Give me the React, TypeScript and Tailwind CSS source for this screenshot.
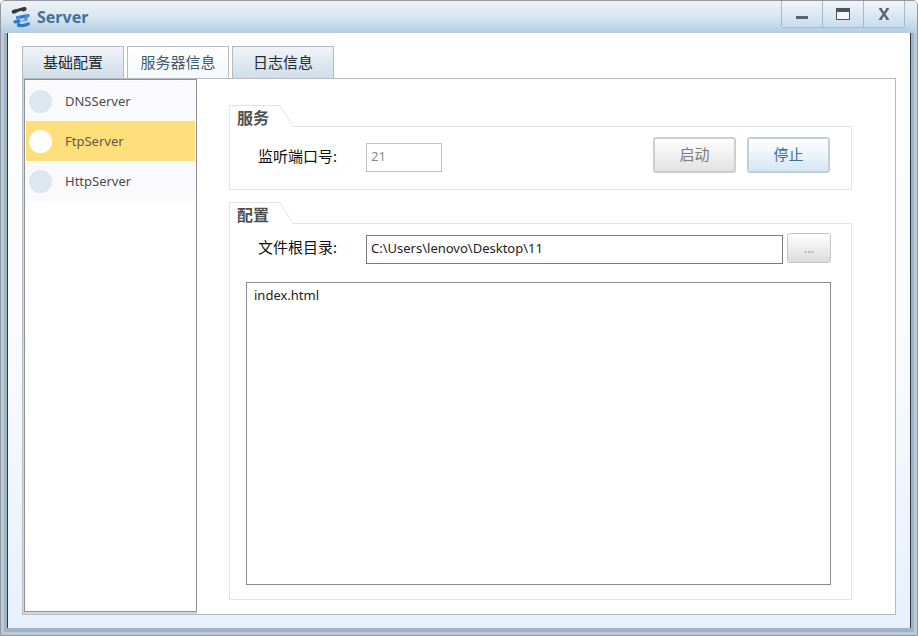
import { useState, type ReactNode } from "react";

const servers = ["DNSServer", "FtpServer", "HttpServer"];
const tabs = ["基础配置", "服务器信息", "日志信息"];
const files = ["index.html"];

function Logo() {
  return (
    <svg width="20" height="24" viewBox="0 0 20 24" fill="none" aria-hidden="true">
      <path d="M3 6.4 L5 6 L9 4.6 L13.4 3.8" stroke="#33383f" strokeWidth="3" strokeLinecap="round" strokeLinejoin="round" />
      <path d="M2.6 6.8 L4 6.4 M12.4 4.4 L13.6 4" stroke="#33383f" strokeWidth="4" strokeLinecap="round" />
      <path d="M6.5 12.6 L12 11.6 L17 10.6" stroke="#2f78c8" strokeWidth="3.2" strokeLinecap="round" />
      <path d="M7.5 12.5 L7.5 19.5 M15.5 11 L14.6 15" stroke="#4a94dc" strokeWidth="3" strokeLinecap="round" />
      <path d="M4 16.8 L7 16.4 M7.5 20.4 L12 20.6 L17.4 19" stroke="#2f78c8" strokeWidth="3.2" strokeLinecap="round" strokeLinejoin="round" />
      <path d="M10 16 L14 15.4" stroke="#7bb8f0" strokeWidth="2" strokeLinecap="round" />
    </svg>
  );
}

function WindowButtons() {
  const button =
    "flex h-[26px] w-[41px] items-center justify-center border-l border-[#a9b8c8] bg-linear-to-b from-[#f1f5f9] to-[#c9dcec]";
  return (
    <div className="flex rounded-b-[3px] border-r border-b border-[#a9b8c8]">
      <button type="button" aria-label="Minimize" className={button}>
        <svg width="14" height="12" viewBox="0 0 14 12" aria-hidden="true">
          <rect x="1" y="8" width="12" height="3" fill="#5b6370" />
        </svg>
      </button>
      <button type="button" aria-label="Maximize" className={button}>
        <svg width="14" height="12" viewBox="0 0 14 12" aria-hidden="true">
          <rect x="0.5" y="0.5" width="13" height="11" fill="#f4f7fa" stroke="#4c5460" />
          <rect x="0" y="0" width="14" height="4" fill="#4c5460" />
        </svg>
      </button>
      <button type="button" aria-label="Close" className={button}>
        <svg width="12" height="12" viewBox="0 0 12 12" fill="none" aria-hidden="true">
          <path d="M2.5 1 L9.5 11 M9.5 1 L2.5 11" stroke="#5b6370" strokeWidth="2.2" />
          <path d="M1 0.8 H4 M8 0.8 H11 M1 11.2 H4 M8 11.2 H11" stroke="#5b6370" strokeWidth="1.4" />
        </svg>
      </button>
    </div>
  );
}

function Group({ title, className, children }: { title: string; className: string; children: ReactNode }) {
  return (
    <section className={`flex flex-col ${className}`}>
      <div className="flex h-[22px]">
        <h2 className="w-[51px] border-t border-l border-[#e4e4e4] pl-[7px] text-[16px] leading-6 font-bold whitespace-nowrap text-[#505050]">
          {title}
        </h2>
        <svg width="14" height="22" viewBox="0 0 14 22" fill="none" aria-hidden="true">
          <path d="M0 0.5 L13 21.5 H14" stroke="#e4e4e4" />
        </svg>
        <div className="flex-1 border-b border-[#e4e4e4]" />
      </div>
      <div className="flex flex-1 flex-col border-x border-b border-[#e4e4e4]">{children}</div>
    </section>
  );
}

export default function App() {
  const [tab, setTab] = useState(1);
  const [server, setServer] = useState(1);
  const [path, setPath] = useState("C:\\Users\\lenovo\\Desktop\\11");

  return (
    <div className="flex min-h-screen flex-col rounded-t-[5px] border border-[#8f979f] bg-[#b9cad9] font-['Noto_Sans','Noto_Sans_CJK_SC',sans-serif] text-[#222]">
      <header className="flex h-8 items-start rounded-t-[4px] bg-linear-to-b from-[#eef2f6] via-[#d9e6f0] to-[#b3cde2] pr-3 pl-[10px]">
        <div className="flex flex-1 items-center gap-[6px] pt-1">
          <Logo />
          <h1 className="text-[16px] leading-6 font-bold text-[#44709c]">Server</h1>
        </div>
        <WindowButtons />
      </header>

      <div className="mx-[3px] mb-[3px] flex flex-1 flex-col border-x-3 border-b-4 border-[#9fb3c5]">
        <main className="flex flex-1 flex-col border-x border-[#25364a] bg-linear-to-b from-white via-[#fafcff] to-[#e7f0fd] px-[14px] pt-[13px] pb-[13px]">
          <div role="tablist" className="flex gap-[3px]">
            {tabs.map((name, i) => (
              <button
                key={name}
                type="button"
                role="tab"
                aria-selected={i === tab}
                onClick={() => setTab(i)}
                className={`h-8 w-[102px] border border-b-0 border-[#b4bac0] pb-px text-[15px] leading-5 ${
                  i === tab
                    ? "bg-linear-to-b from-white to-[#f3f9fd] text-[#44596e]"
                    : "bg-linear-to-b from-[#f0f4f8] to-[#d0deea] text-[#22282e]"
                }`}
              >
                {name}
              </button>
            ))}
          </div>

          <div className="flex flex-1 border border-[#b8bcc0] bg-white">
            <nav className="flex w-[174px] border-b-2 border-l border-[#d3d9df]">
              <ul className="flex-1 border border-[#8d9196] p-px">
                {servers.map((name, i) => (
                  <li key={name}>
                    <button
                      type="button"
                      onClick={() => setServer(i)}
                      className={`flex h-10 w-full items-center gap-[13px] pl-[3px] text-[13px] leading-5 ${
                        i === server ? "bg-[#ffdf7b] text-[#625a48]" : "bg-[#fafafc] text-[#4a4a52]"
                      }`}
                    >
                      <span className={`size-[23px] rounded-full ${i === server ? "bg-white" : "bg-[#dde7f0]"}`} />
                      {name}
                    </button>
                  </li>
                ))}
              </ul>
            </nav>

            <div className="flex flex-1 flex-col gap-3 pt-[26px] pr-[43px] pb-[14px] pl-8">
              <Group title="服务" className="">
                <div className="flex items-start pt-[10px] pr-[21px] pb-4 pl-7">
                  <label htmlFor="port" className="w-[108px] pt-[9px] text-[15px] leading-5 text-[#111]">
                    监听端口号:
                  </label>
                  <input
                    id="port"
                    disabled
                    defaultValue="21"
                    className="mt-[6px] h-[29px] w-[76px] border border-[#c4c4c4] bg-white px-1 pb-[3px] text-[13px] text-[#8a8a8a]"
                  />
                  <div className="ml-auto flex gap-[11px]">
                    <button
                      type="button"
                      disabled
                      className="h-9 w-[83px] rounded-[3px] border-2 border-[#cecece] bg-linear-to-b from-white to-[#e2e2e2] pb-[2px] text-[15px] leading-5 text-[#7c7c7c]"
                    >
                      启动
                    </button>
                    <button
                      type="button"
                      className="h-9 w-[83px] rounded-[3px] border-2 border-[#c4ced7] bg-linear-to-b from-white to-[#d6e7f5] pb-[2px] text-[15px] leading-5 text-[#3f6d9f]"
                    >
                      停止
                    </button>
                  </div>
                </div>
              </Group>

              <Group title="配置" className="flex-1">
                <div className="flex items-start pt-[9px] pr-5 pl-7">
                  <label htmlFor="root" className="w-[108px] pt-1 text-[15px] leading-5 text-[#111]">
                    文件根目录:
                  </label>
                  <input
                    id="root"
                    value={path}
                    onChange={(e) => setPath(e.target.value)}
                    className="mt-[2px] h-[29px] min-w-0 flex-1 border border-[#7c7c7c] bg-white px-1 pb-[3px] text-[13px] text-[#222]"
                  />
                  <button
                    type="button"
                    aria-label="Browse"
                    className="ml-1 h-[30px] w-[44px] rounded-[3px] border border-[#c6c6c6] bg-linear-to-b from-white to-[#dcdcdc] text-[13px] leading-5 text-[#999]"
                  >
                    ...
                  </button>
                </div>
                <ul
                  aria-label="Files"
                  className="mt-[18px] mr-5 mb-[14px] ml-4 flex-1 border border-[#8c8c8c] bg-white px-[7px] pt-[2px] text-[13px] leading-5 text-[#222]"
                >
                  {files.map((file) => (
                    <li key={file}>{file}</li>
                  ))}
                </ul>
              </Group>
            </div>
          </div>
        </main>
      </div>
    </div>
  );
}
